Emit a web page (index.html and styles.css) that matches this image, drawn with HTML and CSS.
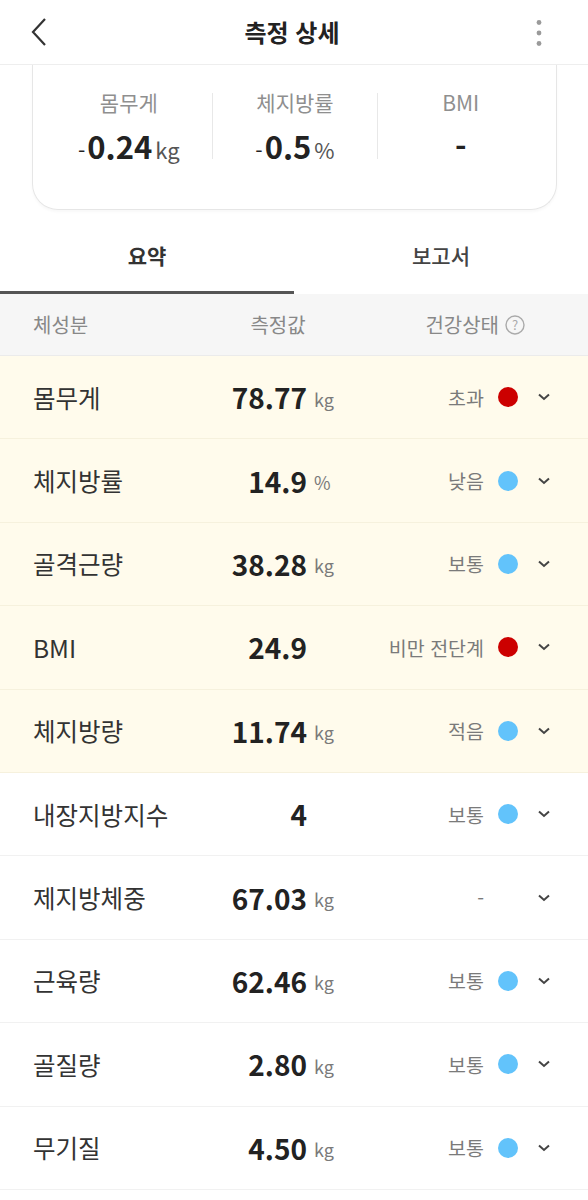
FILE: index.html
```html
<!DOCTYPE html>
<html lang="ko">
<head>
  <meta charset="UTF-8" />
  <meta name="viewport" content="width=device-width, initial-scale=1.0"/>
  <title>측정 상세</title>
  <link rel="stylesheet" href="styles.css">
</head>
<body>

  <header class="topbar">
    <button class="icon-btn back">
      <svg width="18" height="28" viewBox="0 0 18 28"><path d="M15 1 L3 14 L15 27" fill="none" stroke="#333" stroke-width="2.2"/></svg>
    </button>
    <h1>측정 상세</h1>
    <button class="icon-btn more">
      <svg width="6" height="28" viewBox="0 0 6 28"><circle cx="3" cy="3.5" r="2.4" fill="#9a9a9a"/><circle cx="3" cy="14" r="2.4" fill="#9a9a9a"/><circle cx="3" cy="24.5" r="2.4" fill="#9a9a9a"/></svg>
    </button>
  </header>

  <section class="summary-card">
    <div class="stat">
      <div class="stat-label">몸무게</div>
      <div class="stat-value"><span class="sign">-</span><b>0.24</b><span class="unit">kg</span></div>
    </div>
    <div class="stat">
      <div class="stat-label">체지방률</div>
      <div class="stat-value"><span class="sign">-</span><b>0.5</b><span class="unit">%</span></div>
    </div>
    <div class="stat">
      <div class="stat-label">BMI</div>
      <div class="stat-value"><b>-</b></div>
    </div>
  </section>

  <nav class="tabs">
    <div class="tab active">요약</div>
    <div class="tab">보고서</div>
  </nav>

  <div class="table-head">
    <div class="th-name">체성분</div>
    <div class="th-value">측정값</div>
    <div class="th-status">건강상태
      <svg width="20" height="20" viewBox="0 0 20 20"><circle cx="10" cy="10" r="9" fill="none" stroke="#aaa" stroke-width="1.4"/><text x="10" y="14.5" text-anchor="middle" font-size="13" fill="#aaa" font-family="Noto Sans CJK KR, sans-serif">?</text></svg>
    </div>
  </div>

  <div id="tableBody"></div>

  <script>
    const rows = [
      { name: "몸무게", value: "78.77", unit: "kg", status: "초과", level: "high", mark: true },
      { name: "체지방률", value: "14.9", unit: "%", status: "낮음", level: "low", mark: true },
      { name: "골격근량", value: "38.28", unit: "kg", status: "보통", level: "low", mark: true },
      { name: "BMI", value: "24.9", unit: "", status: "비만 전단계", level: "high", mark: true },
      { name: "체지방량", value: "11.74", unit: "kg", status: "적음", level: "low", mark: true },
      { name: "내장지방지수", value: "4", unit: "", status: "보통", level: "low" },
      { name: "제지방체중", value: "67.03", unit: "kg", status: "-", level: "none" },
      { name: "근육량", value: "62.46", unit: "kg", status: "보통", level: "low" },
      { name: "골질량", value: "2.80", unit: "kg", status: "보통", level: "low" },
      { name: "무기질", value: "4.50", unit: "kg", status: "보통", level: "low" }
    ];

    const body = document.getElementById("tableBody");
    rows.forEach(r => {
      const row = document.createElement("div");
      row.className = "row" + (r.mark ? " marked" : "");
      row.innerHTML = `
        <div class="name">${r.name}</div>
        <div class="num">${r.value}</div>
        <div class="unit">${r.unit}</div>
        <div class="status">${r.status}</div>
        <span class="dot ${r.level}"></span>
        <svg class="chev" width="12" height="8" viewBox="0 0 12 8"><path d="M1 1.5 L6 6 L11 1.5" fill="none" stroke="#444" stroke-width="2"/></svg>
      `;
      body.appendChild(row);
    });
  </script>

</body>
</html>
```

FILE: styles.css
```css
:root {
  --text-dark: #222;
  --text-main: #333;
  --text-sub: #7a7a7a;
  --line: #eeeeee;
  --mark-bg: #fffbec;
  --mark-line: #f6f1dd;
  --red: #cc0000;
  --blue: #62c3fb;
}

* {
  box-sizing: border-box;
}

body {
  margin: 0;
  background: #fff;
  color: var(--text-main);
  font-family: "Noto Sans CJK KR", "Noto Sans", sans-serif;
  width: 588px;
  overflow: hidden;
}

.topbar {
  height: 65px;
  display: flex;
  align-items: center;
  justify-content: space-between;
  padding: 0 46px 0 30px;
  border-bottom: 1px solid var(--line);
}

.topbar h1 {
  margin: 0 0 0 12px;
  font-size: 24px;
  font-weight: 700;
  color: var(--text-dark);
  line-height: 30px;
}

.icon-btn {
  background: none;
  border: none;
  padding: 0;
  display: flex;
  align-items: center;
  cursor: pointer;
}

.icon-btn.back {
  width: 24px;
}

.icon-btn.more {
  width: 24px;
  justify-content: flex-end;
  margin-top: 2px;
}

.summary-card {
  margin: 0 31px 0 32px;
  height: 145px;
  border: 1px solid #e6e6e6;
  border-top: none;
  border-radius: 0 0 26px 26px;
  box-shadow: 0 2px 3px rgba(0, 0, 0, 0.03);
  padding: 28px 13px 0;
  display: grid;
  grid-template-columns: repeat(3, 1fr);
  align-items: start;
}

.stat {
  text-align: center;
  height: 66px;
}

.stat + .stat {
  border-left: 1px solid #e8e8e8;
}

.stat-label {
  font-size: 21px;
  line-height: 22px;
  color: #8f8f8f;
  margin-top: -2px;
}

.stat-value {
  margin-top: 14px;
  line-height: 38px;
  color: var(--text-dark);
  display: flex;
  justify-content: center;
  align-items: baseline;
}

.stat-value .sign {
  font-size: 21px;
  margin-right: 2px;
}

.stat-value b {
  font-size: 31px;
  font-weight: 700;
}

.stat-value .unit {
  font-size: 22px;
  margin-left: 3px;
  color: #555;
}

.tabs {
  display: flex;
}

.tab {
  flex: 1;
  text-align: center;
  font-size: 21px;
  font-weight: 500;
  color: #444;
  line-height: 26px;
  padding: 32px 0 23px;
  border-bottom: 3px solid transparent;
}

.tab.active {
  font-weight: 700;
  color: var(--text-main);
  border-bottom-color: #555;
}

.table-head {
  height: 62px;
  background: #f6f6f6;
  border-bottom: 1px solid #ebebeb;
  display: flex;
  align-items: center;
  padding: 0 63px 0 33px;
  font-size: 20px;
  color: #888;
}

.th-name {
  width: 160px;
}

.th-value {
  width: 170px;
  text-align: center;
}

.th-status {
  flex: 1;
  display: flex;
  justify-content: flex-end;
  align-items: center;
  gap: 6px;
}

.row {
  height: 83.4px;
  display: flex;
  align-items: center;
  padding: 0 38px 0 33px;
  border-bottom: 1px solid #f1f1f1;
}

.row.marked {
  background: var(--mark-bg);
  border-bottom-color: var(--mark-line);
}

.row .name {
  width: 160px;
  font-size: 24.5px;
  color: var(--text-main);
}

.row .num {
  width: 114px;
  text-align: right;
  font-size: 28px;
  font-weight: 700;
  color: var(--text-dark);
}

.row .unit {
  width: 60px;
  padding-left: 7px;
  font-size: 18px;
  color: var(--text-sub);
  padding-top: 3px;
}

.row .status {
  flex: 1;
  text-align: right;
  font-size: 19.5px;
  color: var(--text-sub);
}

.dot {
  width: 20px;
  height: 20px;
  border-radius: 50%;
  margin-left: 14px;
}

.dot.high {
  background: var(--red);
}

.dot.low {
  background: var(--blue);
}

.dot.none {
  visibility: hidden;
}

.chev {
  margin-left: 20px;
}
```
